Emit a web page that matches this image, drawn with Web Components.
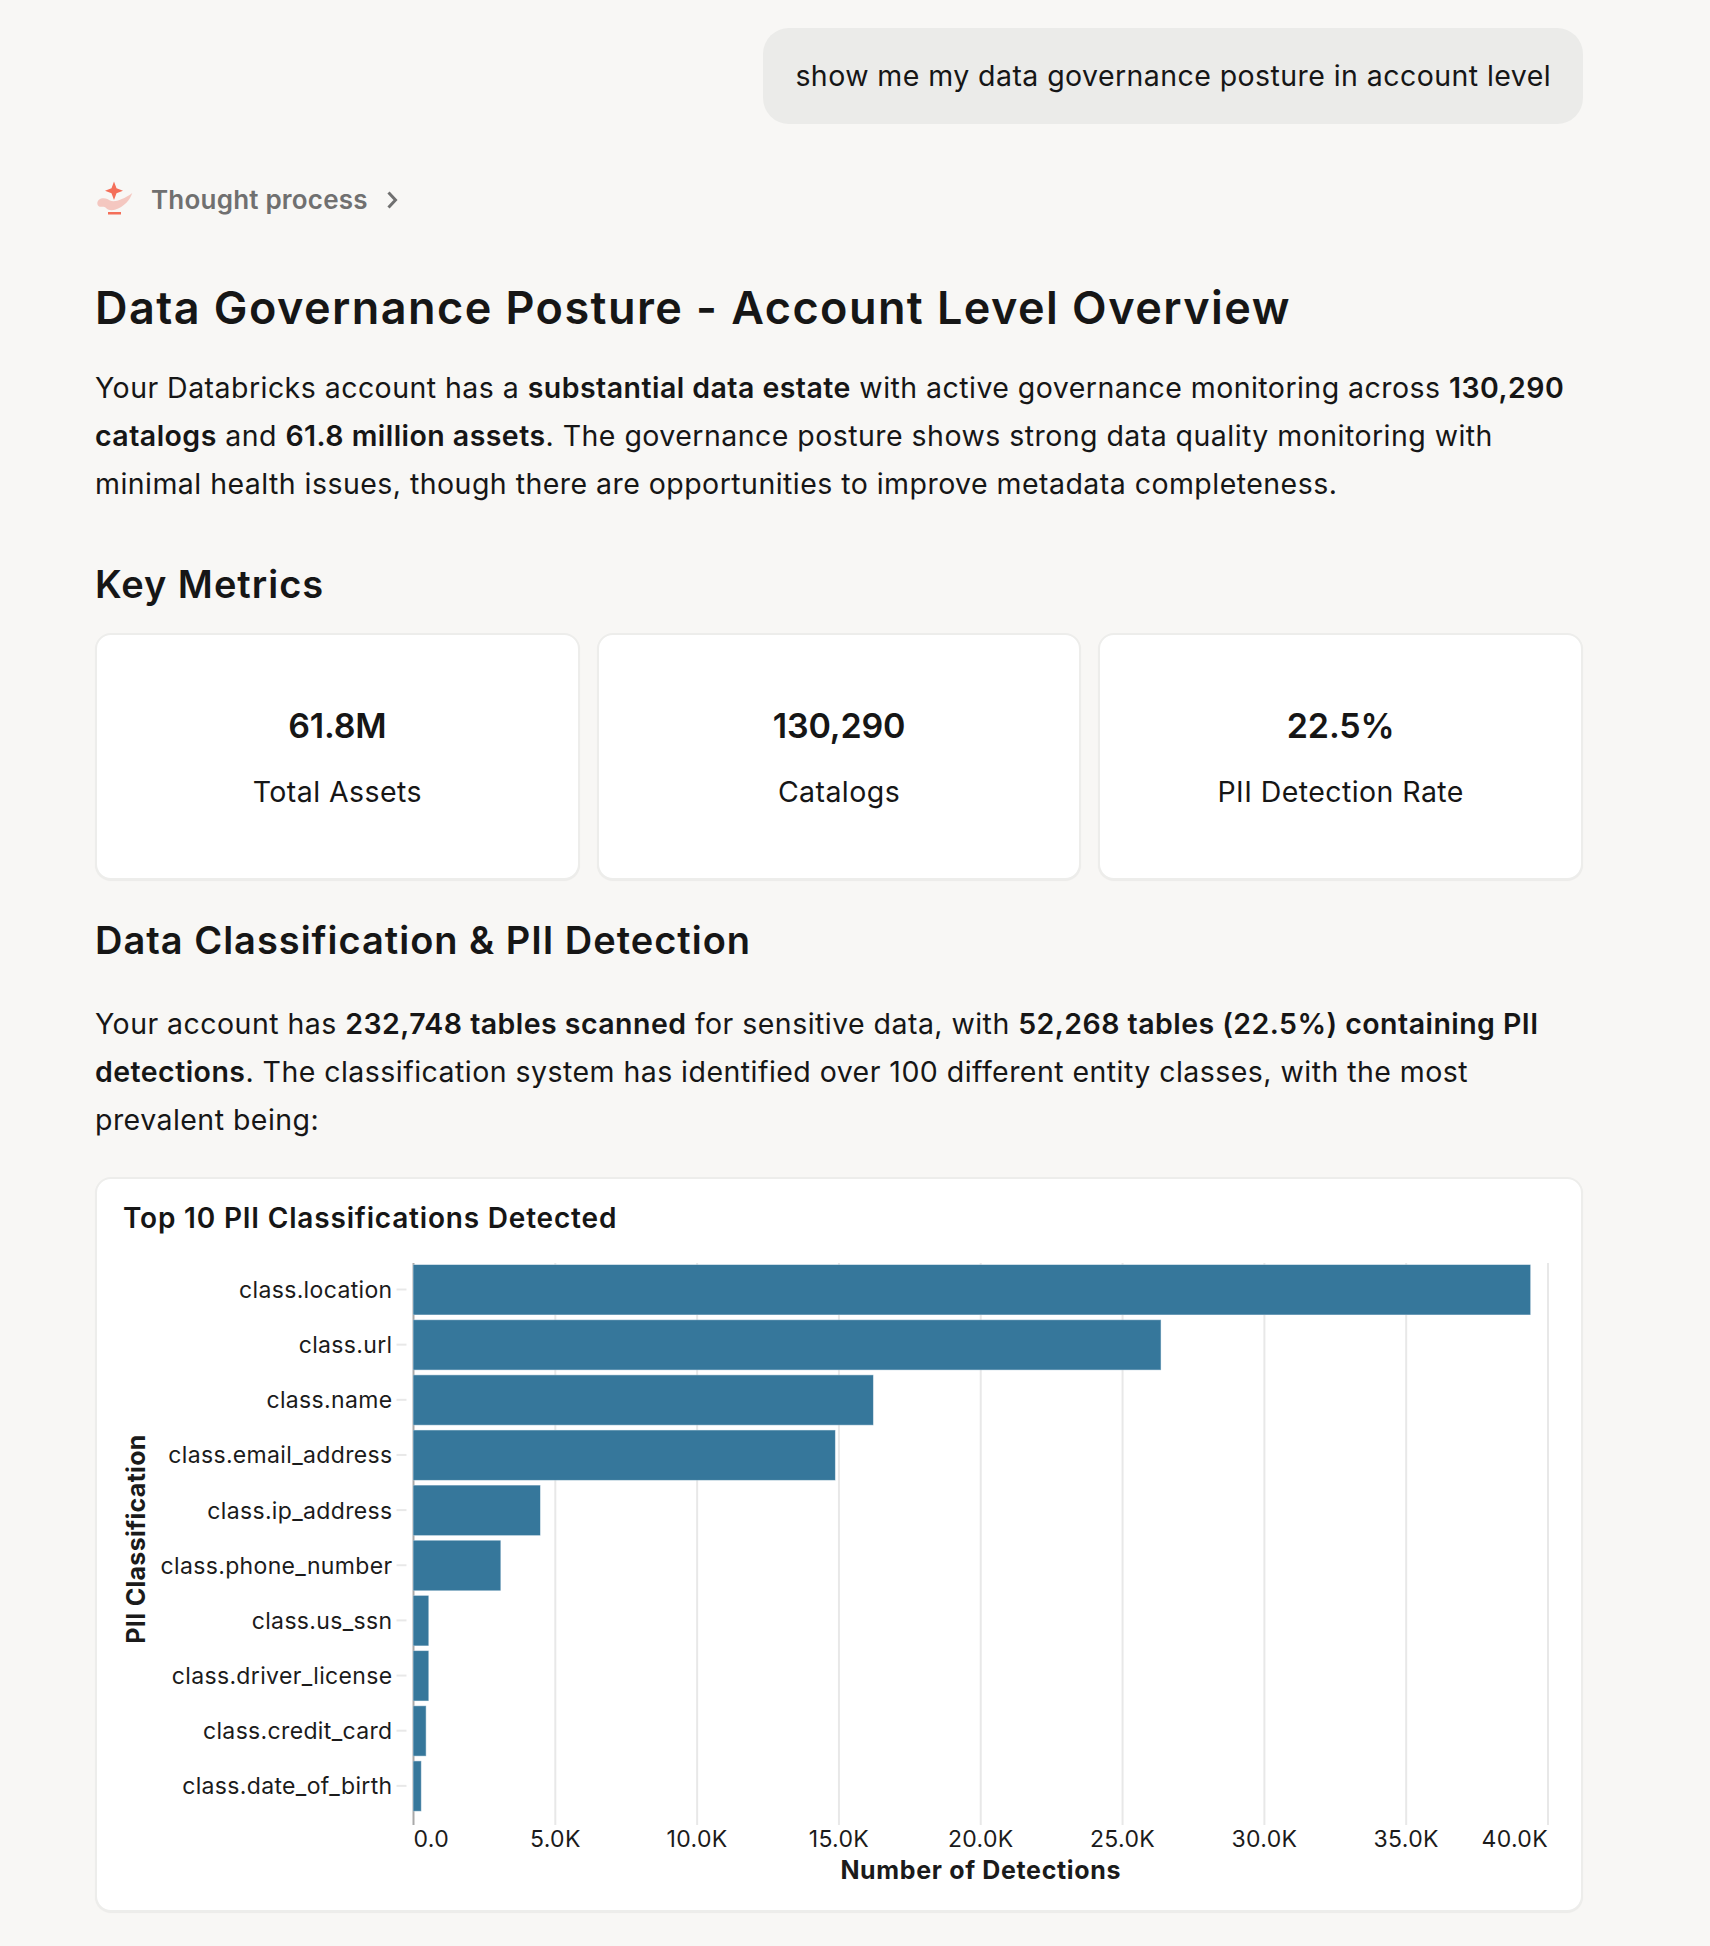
<!DOCTYPE html>
<html>
<head>
<meta charset="utf-8">
<title>Data Governance Posture</title>
<style>
  html, body { margin: 0; padding: 0; background: #f8f7f5; }
  body {
    font-family: "Inter", "Liberation Sans", sans-serif;
    color: #161616;
  }
  answer-page { --body-size: 28.5px; --body-track: 0.016em; }
  b { font-weight: 600; }
</style>
</head>
<body>
<answer-page>
  <user-bubble>show me my data governance posture in account level</user-bubble>
  <thought-row>Thought process</thought-row>
  <page-title>Data Governance Posture - Account Level Overview</page-title>
  <body-para gap="26">Your Databricks account has a <b>substantial data estate</b> with active governance monitoring across <b>130,290</b> <b>catalogs</b> and <b>61.8 million assets</b>. The governance posture shows strong data quality monitoring with minimal health issues, though there are opportunities to improve metadata completeness.</body-para>
  <section-title gap="53">Key Metrics</section-title>
  <metric-row>
    <metric-card value="61.8M">Total Assets</metric-card>
    <metric-card value="130,290">Catalogs</metric-card>
    <metric-card value="22.5%">PII Detection Rate</metric-card>
  </metric-row>
  <section-title gap="37">Data Classification &amp; PII Detection</section-title>
  <body-para gap="35">Your account has <b>232,748 tables scanned</b> for sensitive data, with <b>52,268 tables (22.5%) containing PII</b> <b>detections</b>. The classification system has identified over 100 different entity classes, with the most prevalent being:</body-para>
  <chart-card title="Top 10 PII Classifications Detected"></chart-card>
</answer-page>

<script>
class AnswerPage extends HTMLElement {
  constructor() {
    super();
    this.attachShadow({mode: "open"}).innerHTML = `
      <style>
        :host { display: block; padding: 28px 127px 34px 95px; }
      </style>
      <slot></slot>`;
  }
}
customElements.define("answer-page", AnswerPage);

class UserBubble extends HTMLElement {
  constructor() {
    super();
    this.attachShadow({mode: "open"}).innerHTML = `
      <style>
        :host {
          display: block;
          width: fit-content;
          margin-left: auto;
          padding: 24px 32px;
          background: #ebebe9;
          border-radius: 26px;
          font-size: var(--body-size);
          line-height: 48px;
          letter-spacing: 0.015em;
          white-space: nowrap;
        }
      </style>
      <slot></slot>`;
  }
}
customElements.define("user-bubble", UserBubble);

class ThoughtRow extends HTMLElement {
  constructor() {
    super();
    this.attachShadow({mode: "open"}).innerHTML = `
      <style>
        :host {
          display: flex;
          align-items: center;
          height: 40px;
          margin-top: 56px;
          color: #707070;
          font-size: 26px;
          font-weight: 600;
          letter-spacing: 0.008em;
        }
        .lamp { width: 40px; height: 40px; margin-right: 16px; flex: none; }
        .chev { width: 16px; height: 20px; margin-left: 17px; flex: none; }
        .txt { margin-bottom: 2px; }
      </style>
      <svg class="lamp" viewBox="0 0 40 40">
        <path fill="#f4c7c0" d="M37.300 13 C35 20 29 27 20 29.800 C15.500 31 12 29.500 10.500 27.500 C8 26 5 27.500 3.500 26 C1.500 24 2 20 6 18.500 C10 17.500 13 18.800 15 20.500 C19 22.500 28 20 37.300 13 Z"/>
        <path fill="#f46f59" d="M19 1.500 L21.500 8.200 L28 10.700 L21.500 13.200 L19 20 L16.500 13.200 L10 10.700 L16.500 8.200 Z"/>
        <rect x="13" y="32" width="13" height="2.500" fill="#f46f59"/>
      </svg>
      <span class="txt"><slot></slot></span>
      <svg class="chev" viewBox="0 0 16 20">
        <path d="M3.500 2.500 L10.500 10 L3.500 17.500" fill="none" stroke="#707070" stroke-width="3"/>
      </svg>`;
  }
}
customElements.define("thought-row", ThoughtRow);

class PageTitle extends HTMLElement {
  constructor() {
    super();
    this.attachShadow({mode: "open"}).innerHTML = `
      <style>
        :host {
          display: block;
          margin-top: 58px;
          font-size: 45px;
          line-height: 60px;
          font-weight: 600;
          letter-spacing: 0.032em;
          white-space: nowrap;
        }
      </style>
      <slot></slot>`;
  }
}
customElements.define("page-title", PageTitle);

class SectionTitle extends HTMLElement {
  constructor() {
    super();
    this.attachShadow({mode: "open"}).innerHTML = `
      <style>
        :host {
          display: block;
          padding-bottom: 2px;
          font-size: 38px;
          line-height: 46px;
          font-weight: 600;
          letter-spacing: 0.026em;
        }
      </style>
      <slot></slot>`;
    this.style.marginTop = this.getAttribute("gap") + "px";
  }
}
customElements.define("section-title", SectionTitle);

class BodyPara extends HTMLElement {
  constructor() {
    super();
    this.attachShadow({mode: "open"}).innerHTML = `
      <style>
        :host {
          display: block;
          font-size: var(--body-size);
          line-height: 48px;
          letter-spacing: var(--body-track);
        }
      </style>
      <slot></slot>`;
    this.style.marginTop = this.getAttribute("gap") + "px";
  }
}
customElements.define("body-para", BodyPara);

class MetricRow extends HTMLElement {
  constructor() {
    super();
    this.attachShadow({mode: "open"}).innerHTML = `
      <style>
        :host {
          display: grid;
          grid-template-columns: repeat(3, 1fr);
          gap: 17px;
          margin-top: 24px;
        }
      </style>
      <slot></slot>`;
  }
}
customElements.define("metric-row", MetricRow);

class MetricCard extends HTMLElement {
  constructor() {
    super();
    this.attachShadow({mode: "open"}).innerHTML = `
      <style>
        :host {
          display: block;
          box-sizing: border-box;
          height: 247px;
          padding-top: 67px;
          text-align: center;
          background: #fff;
          border: 2px solid #ededeb;
          border-radius: 16px;
          box-shadow: 0 1px 1px rgba(0, 0, 0, .05);
        }
        .value {
          font-size: 34px;
          line-height: 48px;
          font-weight: 600;
          letter-spacing: -0.005em;
        }
        .label {
          margin-top: 18px;
          font-size: var(--body-size);
          line-height: 48px;
          letter-spacing: 0.015em;
        }
      </style>
      <div class="value"></div>
      <div class="label"><slot></slot></div>`;
    this.shadowRoot.querySelector(".value").textContent = this.getAttribute("value");
  }
}
customElements.define("metric-card", MetricCard);

const PII_ROWS = [
  ["class.location", 39370],
  ["class.url", 26340],
  ["class.name", 16200],
  ["class.email_address", 14860],
  ["class.ip_address", 4460],
  ["class.phone_number", 3060],
  ["class.us_ssn", 520],
  ["class.driver_license", 520],
  ["class.credit_card", 430],
  ["class.date_of_birth", 260]
];

class BarChart extends HTMLElement {
  constructor() {
    super();
    this.attachShadow({mode: "open"});
  }

  connectedCallback() {
    const left = 290.5, top = 40, width = 1134.5, height = 562;
    const x = v => left + v / 40000 * width;
    let grid = "", bars = "", rowText = "", tickText = "";
    for (let i = 0; i <= 8; i++) {
      const gx = x(i * 5000);
      const cls = i === 0 ? "axis" : "grid";
      grid += `<line class="${cls}" x1="${gx}" x2="${gx}" y1="${top}" y2="${top + height}"/>`;
      const label = i === 0 ? "0.0" : (i * 5).toFixed(1) + "K";
      const anchor = i === 0 ? "start" : i === 8 ? "end" : "middle";
      tickText += `<text class="tick" x="${gx}" y="${top + height + 22}" text-anchor="${anchor}">${label}</text>`;
    }
    PII_ROWS.forEach((row, i) => {
      const by = top + 2 + i * 55.15;
      bars += `<rect class="bar" x="${left}" y="${by}" width="${x(row[1]) - left}" height="49.500"/>`;
      rowText += `<line class="grid" x1="${left - 17}" x2="${left - 7}" y1="${by + 24.500}" y2="${by + 24.500}"/>`;
      rowText += `<text class="tick" x="${left - 21}" y="${by + 33}" text-anchor="end">${row[0]}</text>`;
    });
    this.shadowRoot.innerHTML = `
      <style>
        :host { display: block; }
        svg { display: block; overflow: visible; }
        text { font-family: "Inter", "Liberation Sans", sans-serif; fill: #1b1b1b; }
        .tick { font-size: 23px; letter-spacing: 0.015em; }
        .title { font-size: 25px; font-weight: 700; letter-spacing: 0.026em; }
        .ytitle { letter-spacing: 0.012em; }
        .grid { stroke: #e8e8e8; stroke-width: 2; }
        .axis { stroke: #a9a9a9; stroke-width: 2; }
        .bar { fill: #36779b; stroke: #9cbccf; stroke-width: 1; paint-order: stroke; }
      </style>
      <svg width="1434" height="680" viewBox="0 0 1434 680">
        ${grid}${bars}${rowText}${tickText}
        <text class="title" x="${left + width / 2}" y="656" text-anchor="middle">Number of Detections</text>
        <text class="title ytitle" transform="translate(22 316) rotate(-90)" text-anchor="middle">PII Classification</text>
      </svg>`;
  }
}
customElements.define("bar-chart", BarChart);

class ChartCard extends HTMLElement {
  constructor() {
    super();
    this.attachShadow({mode: "open"}).innerHTML = `
      <style>
        :host {
          display: block;
          box-sizing: border-box;
          height: 735px;
          margin-top: 33px;
          padding: 20px 26px 0 26px;
          background: #fff;
          border: 2px solid #ededeb;
          border-radius: 16px;
          box-shadow: 0 1px 1px rgba(0, 0, 0, .05);
        }
        .head {
          padding-bottom: 2px;
          font-size: 28px;
          line-height: 38px;
          font-weight: 600;
          letter-spacing: 0.029em;
        }
        bar-chart { margin-top: -16px; }
      </style>
      <div class="head"></div>
      <bar-chart></bar-chart>`;
    this.shadowRoot.querySelector(".head").textContent = this.getAttribute("title");
  }
}
customElements.define("chart-card", ChartCard);
</script>
</body>
</html>
